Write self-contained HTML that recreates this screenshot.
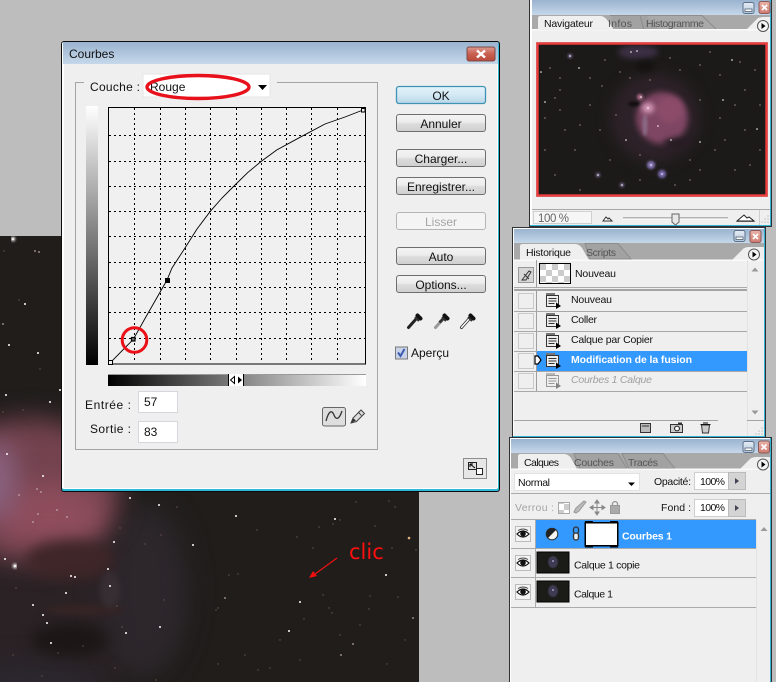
<!DOCTYPE html>
<html><head><meta charset="utf-8"><title>Courbes</title>
<style>
html,body{margin:0;padding:0;background:#bdbdbd;overflow:hidden}
svg{display:block}
text{font-family:"Liberation Sans",sans-serif;font-size:11.5px;fill:#111}
.b{text-anchor:middle;font-size:12px}
</style></head><body>
<svg width="776" height="682" viewBox="0 0 776 682" xmlns="http://www.w3.org/2000/svg">
<defs>
<linearGradient id="tb" x1="0" y1="0" x2="0" y2="1"><stop offset="0" stop-color="#9ab3cf"/><stop offset="1" stop-color="#c6d8ea"/></linearGradient>
<linearGradient id="vg" x1="0" y1="0" x2="0" y2="1"><stop offset="0" stop-color="#fff"/><stop offset="1" stop-color="#000"/></linearGradient>
<linearGradient id="hg" x1="0" y1="0" x2="1" y2="0"><stop offset="0" stop-color="#000"/><stop offset="1" stop-color="#fff"/></linearGradient>
<linearGradient id="btn" x1="0" y1="0" x2="0" y2="1"><stop offset="0" stop-color="#f4f4f4"/><stop offset=".45" stop-color="#ececec"/><stop offset=".55" stop-color="#dcdcdc"/><stop offset="1" stop-color="#cfcfcf"/></linearGradient>
<linearGradient id="okb" x1="0" y1="0" x2="0" y2="1"><stop offset="0" stop-color="#e4f3fb"/><stop offset=".5" stop-color="#d3e9f5"/><stop offset="1" stop-color="#b8d6e6"/></linearGradient>
<linearGradient id="cl" x1="0" y1="0" x2="0" y2="1"><stop offset="0" stop-color="#dd9a90"/><stop offset=".5" stop-color="#c8604f"/><stop offset="1" stop-color="#b94a3c"/></linearGradient>
<linearGradient id="cl2" x1="0" y1="0" x2="0" y2="1"><stop offset="0" stop-color="#e8b4aa"/><stop offset="1" stop-color="#d07a6e"/></linearGradient>
<linearGradient id="mn" x1="0" y1="0" x2="0" y2="1"><stop offset="0" stop-color="#e6eef6"/><stop offset="1" stop-color="#b4c6da"/></linearGradient>
<filter id="b14" x="-60%" y="-60%" width="220%" height="220%" color-interpolation-filters="sRGB"><feGaussianBlur stdDeviation="13"/></filter>
<filter id="b7" x="-60%" y="-60%" width="220%" height="220%" color-interpolation-filters="sRGB"><feGaussianBlur stdDeviation="7"/></filter>
<filter id="b3" x="-80%" y="-80%" width="260%" height="260%" color-interpolation-filters="sRGB"><feGaussianBlur stdDeviation="3"/></filter>
<filter id="b1" x="-80%" y="-80%" width="260%" height="260%" color-interpolation-filters="sRGB"><feGaussianBlur stdDeviation="1.2"/></filter>
<filter id="s4" x="-5%" y="-5%" width="110%" height="110%" color-interpolation-filters="sRGB"><feGaussianBlur stdDeviation=".5"/></filter>
<pattern id="chk" width="12" height="12" patternUnits="userSpaceOnUse"><rect width="12" height="12" fill="#fff"/><rect width="6" height="6" fill="#ccc"/><rect x="6" y="6" width="6" height="6" fill="#ccc"/></pattern>
<clipPath id="mainc"><rect x="0" y="236" width="419" height="446"/></clipPath>
<clipPath id="navc"><rect x="539" y="45" width="226" height="149"/></clipPath>
<g id="doc"><rect x="0" y="0" width="9" height="3" fill="#777"/><rect x=".5" y="2.500" width="12" height="11" fill="#eee" stroke="#333"/><path d="M2.500 5.500h8M2.500 8h8M2.500 10.500h6" stroke="#333" fill="none"/><path d="M10 9.500l5 3.500-5 3z" fill="#000"/></g>
<g id="drop"><path d="M1.500 15.500L9.500 6.500" stroke="#222" stroke-width="3" stroke-linecap="round"/><path d="M8 5l4 4" stroke="#333" stroke-width="2"/><path d="M10.500 3.500l3 3" stroke="#111" stroke-width="4" stroke-linecap="round"/></g>
<g id="eye"><rect x=".5" y=".5" width="15" height="15" fill="#f3f3f3" stroke="#bbb"/><path d="M2 8q6-6 12 0q-6 6-12 0z" fill="#fff" stroke="#111" stroke-width="1.200"/><circle cx="8" cy="7.700" r="2.800" fill="#111"/><path d="M3 4.500q5-3 10 0" stroke="#444" fill="none"/></g>
<g id="menu"><circle r="5.500" cy="0" fill="#f4f4f4" stroke="#555"/><path d="M-1.500-3l4 3-4 3z" fill="#000"/></g>
<g id="mini"><rect x=".5" y=".5" width="11" height="11" rx="2" fill="url(#mn)" stroke="#5d7288"/><rect x="2.500" y="7" width="7" height="2.500" fill="#fff" stroke="#405066" stroke-width=".7"/></g>
<g id="closeb"><rect x=".5" y=".5" width="11" height="12" rx="2" fill="url(#cl2)" stroke="#8a5a58"/><path d="M3.500 4l5 5M8.500 4l-5 5" stroke="#fff" stroke-width="1.800"/></g>
</defs>

<!-- backdrop -->
<rect width="776" height="682" fill="#bdbdbd"/>

<!-- main astro image -->
<g clip-path="url(#mainc)">
<rect x="0" y="236" width="419" height="446" fill="#201d1b"/>
<ellipse cx="50" cy="610" rx="125" ry="85" fill="#2a2225" filter="url(#b14)"/>
<ellipse cx="145" cy="590" rx="42" ry="85" fill="#2d272c" filter="url(#b14)"/>
<ellipse cx="15" cy="690" rx="90" ry="25" fill="#2c2831" filter="url(#b14)"/>
<ellipse cx="30" cy="490" rx="90" ry="72" fill="#74434f" filter="url(#b14)"/>
<ellipse cx="50" cy="515" rx="55" ry="32" fill="#8e4d5c" filter="url(#b14)"/>
<ellipse cx="-5" cy="480" rx="22" ry="40" fill="#8a6280" filter="url(#b14)"/>
<ellipse cx="70" cy="560" rx="45" ry="20" fill="#3f2628" filter="url(#b7)"/>
<ellipse cx="70" cy="640" rx="38" ry="16" fill="#1c1616" filter="url(#b7)"/>
<ellipse cx="85" cy="610" rx="40" ry="6" fill="#352425" filter="url(#b3)"/>
<ellipse cx="110" cy="590" rx="10" ry="18" fill="#372e33" filter="url(#b3)"/>
<path d="M13 239h0M15 566h0" stroke="#fff" stroke-width="4.500" stroke-linecap="round" filter="url(#b1)"/>
<path d="M13 239h0M15 566h0M130 498h0M159 505h0M236 516h0M335 519h0M114 542h0M193 545h0M5 559h0M108 569h0M71 576h0M75 577h0M110 586h0M66 593h0M386 575h0M33 605h0M43 615h0M47 623h0M160 627h0M126 633h0M51 643h0M289 631h0M300 602h0M9 345h0M38 353h0M6 395h0M50 402h0M60 390h0M7 454h0M43 476h0M25 304h0" stroke="#fff" stroke-width="2" stroke-linecap="round"/>
<path d="M225 598h0M353 644h0M341 655h0M413 618h0M38 514h0M57 510h0M67 517h0M33 522h0M19 495h0M35 251h0M39 252h0M3 324h0M37 489h0M41 492h0" stroke="#c4afaf" stroke-width="1.700" stroke-linecap="round"/>
<path d="M409 538h0" stroke="#e6b47c" stroke-width="2.600" stroke-linecap="round"/>
<path d="M257 530h0M319 527h0M395 507h0M356 502h0M389 501h0M375 526h0M416 550h0M323 595h0M369 609h0M304 619h0M216 610h0M218 608h0M238 574h0M229 575h0M164 600h0M218 664h0M258 670h0M398 597h0M370 596h0M329 608h0M332 613h0M340 635h0M387 664h0M42 676h0M156 680h0M115 668h0M83 646h0M58 653h0M13 655h0M120 528h0M145 544h0M161 535h0M16 588h0M117 606h0M122 627h0M177 507h0M333 524h0M313 548h0M297 537h0M392 548h0M4 251h0M19 300h0M40 369h0M3 412h0M23 410h0M300 660h0M280 640h0M360 625h0M245 655h0M405 640h0M270 668h0M340 520h0" stroke="#6f554c" stroke-width="1.400" stroke-linecap="round"/>
</g>
<text x="349" y="559" style="font-family:'DejaVu Sans',sans-serif;font-size:21px;fill:#ff1010">clic</text>
<path d="M337 558L315 574" stroke="#f01010" stroke-width="1.200"/><path d="M309 578l4-7 4 5z" fill="#f01010"/>

<!-- Curves dialog -->
<rect x="61" y="41" width="439" height="451" rx="3" fill="#0c0c0c"/>
<rect x="62" y="42" width="437" height="449" rx="2" fill="#2fb8d8"/>
<rect x="62" y="42" width="436" height="447" rx="2" fill="#fff"/>
<rect x="63" y="42" width="435" height="22" fill="url(#tb)"/>
<rect x="64" y="64" width="433" height="424" fill="#efefef"/>
<text x="69" y="58" style="font-size:12px">Courbes</text>
<rect x="467" y="47" width="28" height="14" rx="2" fill="url(#cl)" stroke="#7a4a48"/>
<path d="M477 50.500l8 7M485 50.500l-8 7" stroke="#fff" stroke-width="2.400"/>

<path d="M84 82.500H75.500V449.500H377.500V82.500H277" fill="none" stroke="#a4a4a4"/>
<text x="90" y="91" style="font-size:12px" textLength="50">Couche :</text>
<rect x="143" y="74" width="127" height="23" fill="#fff" stroke="#e4e4e4"/>
<text x="150" y="91" style="font-size:12px">Rouge</text>
<path d="M258 85h9l-4.500 5z" fill="#000"/>
<ellipse cx="198" cy="87" rx="51" ry="11.500" fill="none" stroke="#e8101a" stroke-width="3.400"/>

<rect x="86" y="106" width="12" height="259" fill="url(#vg)"/>
<rect x="108.500" y="107.500" width="257" height="256.500" fill="#f0f0f0" stroke="#000"/>
<g fill="none" stroke="#000" stroke-dasharray="2 3" shape-rendering="crispEdges">
<path d="M134.500 108V363M160.500 108V363M185.500 108V363M210.500 108V363M236.500 108V363M261.500 108V363M286.500 108V363M311.500 108V363M337.500 108V363"/>
<path d="M109 135.500H365M109 161.500H365M109 186.500H365M109 211.500H365M109 236.500H365M109 262.500H365M109 287.500H365M109 312.500H365M109 338.500H365"/>
</g>
<polyline points="110.700,362.300 133.300,339.300 147,315 167,280 172,268 185,248 197,229 210,211.700 222,198 235,185 248,172.300 261.700,161 276.700,150 300,137.300 325,124 345,117 363,110" fill="none" stroke="#000" stroke-width=".9"/>
<rect x="108.500" y="360.500" width="4" height="4" fill="#f0f0f0" stroke="#000"/>
<rect x="361.500" y="108.500" width="3.500" height="3.500" fill="#f0f0f0" stroke="#000"/>
<rect x="165" y="278" width="5" height="5" fill="#000"/>
<rect x="131.500" y="337.500" width="3.500" height="3.500" fill="#777" stroke="#000" stroke-width="1.200"/>
<circle cx="134.500" cy="340" r="12.300" fill="none" stroke="#ea1018" stroke-width="3"/>

<rect x="108" y="374" width="258" height="12" fill="url(#hg)"/>
<rect x="108" y="374" width="258" height="1" fill="#9a9a9a"/>
<rect x="228" y="374" width="16" height="12" fill="#fff"/>
<path d="M228.500 374v12M243.500 374v12" stroke="#000"/>
<path d="M234.500 376.500v7l-4-3.500z" fill="#fff" stroke="#000"/><path d="M238 376.500v7l4-3.500z" fill="#000"/>

<text x="85" y="409" style="font-size:12px" textLength="46">Entrée :</text>
<text x="90" y="433" style="font-size:12px" textLength="41">Sortie :</text>
<rect x="138.500" y="391.500" width="39" height="21" fill="#fff" stroke="#d6d6dc"/>
<rect x="138.500" y="421.500" width="39" height="21" fill="#fff" stroke="#d6d6dc"/>
<text x="144" y="406" style="font-size:12px">57</text>
<text x="144" y="436" style="font-size:12px">83</text>

<rect x="322.500" y="407.500" width="23" height="18.500" rx="2" fill="#dedede" stroke="#666"/>
<path d="M326 421C329 410 332 410 334 415C336 420 339 420 342 411" fill="none" stroke="#333" stroke-width="1.300"/>
<path d="M351 423l2-5 8-8 3.500 3.500-8 8z" fill="#ddd" stroke="#444"/><path d="M351 423l2-5 3 2.500z" fill="#333"/><path d="M358 412l3.500 3.500" stroke="#444"/>

<!-- buttons -->
<rect x="396.500" y="86.500" width="89" height="17" rx="2.500" fill="url(#okb)" stroke="#3f93b4" stroke-width="1.300"/>
<g fill="url(#btn)" stroke="#6e6e6e">
<rect x="396.500" y="114.500" width="89" height="17" rx="2.500"/>
<rect x="396.500" y="149.500" width="89" height="17" rx="2.500"/>
<rect x="396.500" y="177.500" width="89" height="17" rx="2.500"/>
<rect x="396.500" y="247.500" width="89" height="17" rx="2.500"/>
<rect x="396.500" y="275.500" width="89" height="17" rx="2.500"/>
</g>
<rect x="396.500" y="212.500" width="89" height="17" rx="2.500" fill="#f4f4f4" stroke="#b5b5b5"/>
<text class="b" x="441" y="100">OK</text>
<text class="b" x="441" y="128">Annuler</text>
<text class="b" x="441" y="163">Charger...</text>
<text class="b" x="441" y="191">Enregistrer...</text>
<text class="b" x="441" y="226" style="fill:#a6a6a6">Lisser</text>
<text class="b" x="441" y="261">Auto</text>
<text class="b" x="441" y="289">Options...</text>

<use href="#drop" x="407" y="312"/>
<g transform="translate(434,312)"><path d="M1.500 15.500L9.500 6.500" stroke="#999" stroke-width="3" stroke-linecap="round"/><path d="M5.500 10.500L9.500 6.500" stroke="#333" stroke-width="3"/><path d="M8 5l4 4" stroke="#333" stroke-width="2"/><path d="M10.500 3.500l3 3" stroke="#111" stroke-width="4" stroke-linecap="round"/></g>
<g transform="translate(460,312)"><path d="M1.500 15.500L9 7" stroke="#222" stroke-width="3" stroke-linecap="round"/><path d="M1.500 15.500L9 7" stroke="#fff" stroke-width="1.500" stroke-linecap="round"/><path d="M8 5l4 4" stroke="#333" stroke-width="2"/><path d="M10.500 3.500l3 3" stroke="#111" stroke-width="4" stroke-linecap="round"/></g>

<rect x="395.500" y="347" width="12" height="12" fill="#c9d3e8" stroke="#7a7a7a"/>
<path d="M398 352.500l2.500 3.500 4-7" fill="none" stroke="#3d5bb0" stroke-width="2"/>
<text x="411" y="357" style="font-size:12px">Aperçu</text>

<rect x="463.500" y="458.500" width="23" height="20" fill="#e6e6e6" stroke="#8e8e8e"/>
<rect x="468.500" y="462.500" width="8" height="7" fill="#ddd" stroke="#222"/>
<rect x="476.500" y="468.500" width="6" height="6" fill="#fff" stroke="#222"/>
<path d="M470 464l5 4M470 464h3M470 464v3" stroke="#000" fill="none"/>

<!-- Navigator panel -->
<rect x="529" y="-2" width="243" height="229" fill="#2f3134"/>
<rect x="530" y="-2" width="241" height="228" fill="#33b3d4"/>
<rect x="530" y="-2" width="240" height="227" fill="#fff"/>
<rect x="532" y="0" width="238" height="225" fill="#efefef"/>
<rect x="532" y="0" width="238" height="15" fill="url(#tb)"/>
<rect x="532" y="15" width="238" height="15" fill="#a9a9a9"/>
<path d="M746 30L757 19Q759 17 764 17H770V30z" fill="#efefef"/>
<path d="M641 15L646 15L659 30H640L632 19z" fill="#a2a2a2"/>
<path d="M612 15L638 15L644 22L650 30H610z" fill="#a2a2a2"/>
<path d="M641 15.500H702L717 30" fill="none" stroke="#8c8c8c"/>
<path d="M610 15.500L640 15.500L644 30" fill="none" stroke="#8c8c8c"/>
<rect x="532" y="29" width="238" height="1.500" fill="#fafafa"/>
<path d="M538 30V18Q538 16 541 16H601Q604 16 608 21L614 30z" fill="#efefef"/>
<text x="544" y="27" style="font-size:10.500px" textLength="49">Navigateur</text>
<text x="608" y="27" style="font-size:10.500px;fill:#555" textLength="24">Infos</text>
<text x="646" y="27" style="font-size:10.500px;fill:#555" textLength="58">Histogramme</text>
<use href="#menu" x="763" y="26"/>
<use href="#mini" x="742.500" y="2"/>
<use href="#closeb" x="758.500" y="1"/>

<rect x="536.500" y="42.500" width="231" height="154" fill="none" stroke="#a9a9a9"/>
<rect x="537.500" y="43.500" width="229" height="152" fill="#1c1a19" stroke="#f03c3c" stroke-width="2.400"/>
<g clip-path="url(#navc)">
<ellipse cx="655" cy="118" rx="44" ry="44" fill="#2e2229" filter="url(#b7)"/>
<ellipse cx="638" cy="52" rx="20" ry="7" fill="#3c3044" filter="url(#b3)"/>
<ellipse cx="662" cy="118" rx="26" ry="26" fill="#7e4663" filter="url(#b3)"/>
<ellipse cx="670" cy="110" rx="13" ry="13" fill="#8c4c69" filter="url(#b3)"/>
<ellipse cx="645" cy="125" rx="2.500" ry="11" fill="#8a6a85" filter="url(#b1)"/>
<ellipse cx="677" cy="143" rx="14" ry="5" fill="#261c22" filter="url(#b3)"/>
<ellipse cx="645" cy="66" rx="9" ry="6" fill="#151212" filter="url(#b3)"/>
<ellipse cx="634" cy="104" rx="6" ry="2.500" fill="#120e0e" filter="url(#b1)"/>
<ellipse cx="648" cy="108" rx="6" ry="5" fill="#e0a4c0" filter="url(#b3)"/>
<circle cx="640" cy="97" r="3" fill="#b0708c" filter="url(#b1)"/>
<circle cx="651" cy="165" r="4" fill="#8a7ab8" filter="url(#b1)"/>
<circle cx="662" cy="174" r="4" fill="#7a6cb0" filter="url(#b1)"/>
<circle cx="598" cy="175" r="2" fill="#8878a8" filter="url(#b1)"/>
<circle cx="622" cy="185" r="2" fill="#8878a8" filter="url(#b1)"/>
<circle cx="570" cy="56" r="2" fill="#8878a8" filter="url(#b1)"/>
<path d="M651 165h0M662 174h0M648 108h0M641 97h0M570 56h0M579 68h0M598 175h0M622 185h0M631 52h0M637 51h0M658 126h0M671 140h0M626 140h0M700 142h0M757 129h0M770 129h0M541 72h0M545 102h0M723 100h0M732 60h0" stroke="#fff" stroke-width="1.600" stroke-linecap="round"/>
<path d="M560 78h0M550 68h0M590 78h0M602 86h0M560 90h0M545 118h0M555 98h0M580 125h0M600 130h0M616 115h0M620 72h0M630 78h0M650 80h0M670 58h0M710 52h0M720 75h0M740 62h0M755 70h0M745 90h0M720 118h0M700 100h0M715 150h0M735 170h0M750 165h0M700 170h0M690 180h0M640 180h0M580 190h0M555 175h0M575 150h0M610 160h0M640 155h0M690 160h0M760 150h0M745 130h0M680 70h0M700 65h0M605 60h0M560 110h0M590 105h0M735 105h0M725 140h0M545 150h0M565 130h0M760 105h0M675 185h0" stroke="#d8b8ae" stroke-width="1.200" stroke-linecap="round"/>
</g>

<rect x="532" y="209" width="238" height="1" fill="#a8a8a8"/>
<rect x="533.500" y="211.500" width="58" height="12" fill="#f6f6f6" stroke="#d0d0d0"/>
<text x="538" y="222" style="font-size:11.500px;fill:#666" textLength="31">100 %</text>
<path d="M603 221l3-4 2 2 1-1 3 3z" fill="#fff" stroke="#333"/>
<rect x="623" y="217" width="105" height="1.500" fill="#b4b4b4"/><rect x="623" y="218.500" width="105" height="1" fill="#fff"/>
<path d="M672 214h7v8l-3.500 3-3.500-3z" fill="#e9e9e9" stroke="#666"/>
<path d="M737 221l7-6 3 3 2-1 5 4z" fill="#fff" stroke="#222"/>
<rect x="737" y="221" width="17" height="1" fill="#555"/>
<rect x="759" y="210" width="1" height="15" fill="#cfcfcf"/>
<path d="M768 222h0M765 222h0M762 222h0M768 219h0M765 219h0M768 216h0" stroke="#aaa" stroke-width="1.300" stroke-linecap="round"/>

<!-- History panel -->
<rect x="512" y="227" width="254" height="211" fill="#2f3134"/>
<rect x="513" y="228" width="252" height="209" fill="#33b3d4"/>
<rect x="513" y="228" width="251" height="208" fill="#fff"/>
<rect x="514" y="229" width="250" height="207" fill="#efefef"/>
<rect x="514" y="229" width="250" height="14" fill="url(#tb)"/>
<rect x="514" y="243" width="250" height="17" fill="#a9a9a9"/>
<path d="M732 260L743 249Q745 247 750 247H764V260z" fill="#efefef"/>
<path d="M585 243.500H618L631 259H590z" fill="#a2a2a2" stroke="#8c8c8c"/>
<path d="M520 260V246Q520 244 523 244H575Q579 244 582 248L589 260z" fill="#efefef"/>
<rect x="514" y="259.500" width="250" height="1.500" fill="#fafafa"/>
<text x="526" y="256" style="font-size:10.500px" textLength="45">Historique</text>
<text x="586" y="256" style="font-size:10.500px;fill:#555" textLength="30">Scripts</text>
<use href="#menu" x="754" y="254.500"/>
<use href="#mini" x="733.500" y="230"/>
<use href="#closeb" x="749.500" y="230"/>

<rect x="518.500" y="267.500" width="15" height="15" fill="#d6d6d6" stroke="#999"/>
<path d="M522 280l7-9 2 1-5 8zM524 274l5 5" stroke="#333" fill="none"/>
<rect x="539.500" y="263.500" width="31" height="20" fill="url(#chk)" stroke="#000"/>
<text x="575" y="277" style="font-size:10.500px" textLength="41">Nouveau</text>
<path d="M536.500 260v27M536.500 291V391" stroke="#9e9e9e" fill="none"/>
<rect x="514" y="287" width="233" height="1" fill="#aaa"/>
<rect x="514" y="289" width="233" height="2" fill="#a4a4a4"/>
<rect x="537" y="351" width="210" height="20" fill="#3399ff"/>
<path d="M514 311.500H747M514 331.500H747M514 351.500H537M514 371.500H747M514 391.500H747" stroke="#a8a8a8"/>
<g fill="none" stroke="#c9c9c9"><rect x="518.500" y="293.500" width="15" height="15"/><rect x="518.500" y="313.500" width="15" height="15"/><rect x="518.500" y="333.500" width="15" height="15"/><rect x="518.500" y="353.500" width="15" height="15"/><rect x="518.500" y="373.500" width="15" height="15"/></g>
<use href="#doc" x="546" y="293"/><use href="#doc" x="546" y="313"/><use href="#doc" x="546" y="333"/><use href="#doc" x="546" y="353"/><use href="#doc" x="546" y="373" opacity=".45"/>
<path d="M535 356h3l3 4-3 4h-3z" fill="#fff" stroke="#000" stroke-width="1.200"/>
<text x="571" y="303" style="font-size:10.500px" textLength="41">Nouveau</text>
<text x="571" y="323" style="font-size:10.500px" textLength="26">Coller</text>
<text x="571" y="343" style="font-size:10.500px" textLength="82">Calque par Copier</text>
<text x="571" y="363" style="font-size:10.500px;font-weight:bold;fill:#fff" textLength="121">Modification de la fusion</text>
<text x="571" y="383" style="font-size:10.500px;font-style:italic;fill:#a0a0a0" textLength="81">Courbes 1 Calque</text>
<path d="M755 267.500l-3.500 4h7z" fill="#999"/><path d="M755 414.500l-3.500-4h7z" fill="#999"/>
<path d="M747.500 260V436" stroke="#e2e2e2"/>
<path d="M514 420.500H718" stroke="#a4a4a4"/><path d="M747 420.500H764" stroke="#a4a4a4"/>
<rect x="640.500" y="423.500" width="10" height="9" fill="#bbb" stroke="#333"/><path d="M642 426h7" stroke="#333"/>
<rect x="670.500" y="424.500" width="12" height="8" fill="#ccc" stroke="#333"/><circle cx="677" cy="428.500" r="2.400" fill="#fff" stroke="#111"/><rect x="678" y="422.500" width="4" height="2" fill="#333"/>
<path d="M701.500 425h8l-1 8h-6z" fill="#ccc" stroke="#333"/><path d="M700.500 424.500h10M703 423h5" stroke="#111"/>
<path d="M762 434h0M759 434h0M756 434h0M762 431h0M759 431h0M762 428h0" stroke="#aaa" stroke-width="1.300" stroke-linecap="round"/>

<!-- Layers panel -->
<rect x="509" y="437" width="263" height="245" fill="#2f3134"/>
<rect x="510" y="438" width="261" height="244" fill="#33b3d4"/>
<rect x="510" y="438" width="260" height="244" fill="#fff"/>
<rect x="511" y="439" width="259" height="243" fill="#efefef"/>
<rect x="511" y="439" width="259" height="14" fill="url(#tb)"/>
<rect x="511" y="453" width="259" height="16" fill="#a9a9a9"/>
<path d="M740 469L750 459Q752 457 757 457H770V469z" fill="#efefef"/>
<path d="M622 453.500H663L675 468.500H629z" fill="#a2a2a2" stroke="#8c8c8c"/>
<path d="M574 453.500H618L627 468.500H580z" fill="#a2a2a2" stroke="#8c8c8c"/>
<path d="M518 469V456Q518 454 521 454H564Q568 454 571 458L577 469z" fill="#efefef"/>
<rect x="511" y="468.500" width="259" height="1.500" fill="#fafafa"/>
<text x="524" y="466" style="font-size:10.500px" textLength="35">Calques</text>
<text x="574" y="466" style="font-size:10.500px;fill:#555" textLength="40">Couches</text>
<text x="628" y="466" style="font-size:10.500px;fill:#555" textLength="30">Tracés</text>
<use href="#menu" x="763" y="464.500"/>
<use href="#mini" x="742.500" y="441"/>
<use href="#closeb" x="758" y="440.500"/>

<rect x="514.500" y="473.500" width="125" height="17" fill="#fff" stroke="#e2e2e2"/>
<text x="518" y="486" style="font-size:10.500px" textLength="32">Normal</text>
<path d="M628 482.500h7l-3.500 3.500z" fill="#000"/>
<text x="654" y="485" style="font-size:10.500px" textLength="37">Opacité:</text>
<rect x="694.500" y="472.500" width="34" height="17" fill="#fff" stroke="#cfcfcf"/>
<text x="700" y="485" style="font-size:10.500px" textLength="25">100%</text>
<rect x="728.500" y="472.500" width="17" height="17" fill="#d4d4d4" stroke="#bbb"/>
<path d="M735 478v6l4-3z" fill="#445"/>
<path d="M511 493.500H770" stroke="#ababab"/>
<text x="515" y="511" style="font-size:10.500px;fill:#a4a4a4" textLength="39">Verrou :</text>
<rect x="558.500" y="502.500" width="11" height="11" fill="url(#chk)" stroke="#aaa"/>
<path d="M574 512l2-4 8-7 2 1-7 9-3 2z" fill="#bbb" stroke="#999"/>
<path d="M597 501v13M591 507.500h13M597 500l-2 3h4zM597 515l-2-3h4zM590 507.500l3-2v4zM605 507.500l-3-2v4z" stroke="#888" fill="#888"/>
<rect x="610.500" y="505.500" width="9" height="8" fill="#aaa" stroke="#999"/><path d="M612.500 505v-2q2.500-3 5 0v2" fill="none" stroke="#999" stroke-width="1.300"/>
<text x="661" y="511" style="font-size:10.500px" textLength="30">Fond :</text>
<rect x="694.500" y="499.500" width="34" height="17" fill="#fff" stroke="#cfcfcf"/>
<text x="700" y="511" style="font-size:10.500px" textLength="25">100%</text>
<rect x="728.500" y="499.500" width="17" height="17" fill="#d4d4d4" stroke="#bbb"/>
<path d="M735 505v6l4-3z" fill="#445"/>
<path d="M511 519.500H756" stroke="#ababab"/>
<rect x="535" y="520" width="221" height="28" fill="#3399ff"/>
<path d="M511 548.500H756M511 577.500H756M511 607.500H756" stroke="#ababab"/>
<path d="M535.500 520V607" stroke="#ababab"/>
<path d="M756.500 520V682" stroke="#e2e2e2"/>
<path d="M764 527l-3.500 4h7z" fill="#999"/>
<use href="#eye" x="515" y="526"/><use href="#eye" x="515" y="555"/><use href="#eye" x="515" y="584"/>
<circle cx="552" cy="534" r="5.800" fill="#f4f4f4" stroke="#333"/><path d="M552 528.200a5.800 5.800 0 0 0-4.100 9.900l8.200-8.200a5.800 5.800 0 0 0-4.100-1.700z" fill="#222"/>
<rect x="573.500" y="527" width="5" height="7" rx="2.500" fill="none" stroke="#333" stroke-width="1.300"/><rect x="573.500" y="533" width="5" height="7" rx="2.500" fill="#eee" stroke="#333" stroke-width="1.300"/>
<rect x="584.500" y="522" width="34" height="24.500" fill="#000"/>
<rect x="586" y="523.500" width="31" height="21.500" fill="#fff"/>
<path d="M585 521.500h8M610 521.500h8M585 547h8M610 547h8" stroke="#000" fill="none"/>
<text x="622" y="539.500" style="font-size:10.500px;font-weight:bold;fill:#fff" textLength="50">Courbes 1</text>
<rect x="537" y="552" width="32" height="21" fill="#1b1b17" stroke="#000"/>
<rect x="537" y="581" width="32" height="21" fill="#1b1b17" stroke="#000"/>
<ellipse cx="553" cy="562" rx="5" ry="6" fill="#3e3a52" filter="url(#s4)"/>
<ellipse cx="553" cy="591" rx="5" ry="6" fill="#3e3a52" filter="url(#s4)"/>
<path d="M553 561h0M553 590h0" stroke="#a89ac8" stroke-width="2" stroke-linecap="round"/>
<text x="574" y="568.500" style="font-size:10.500px" textLength="66">Calque 1 copie</text>
<text x="574" y="597.500" style="font-size:10.500px" textLength="39">Calque 1</text>
</svg>
</body></html>
